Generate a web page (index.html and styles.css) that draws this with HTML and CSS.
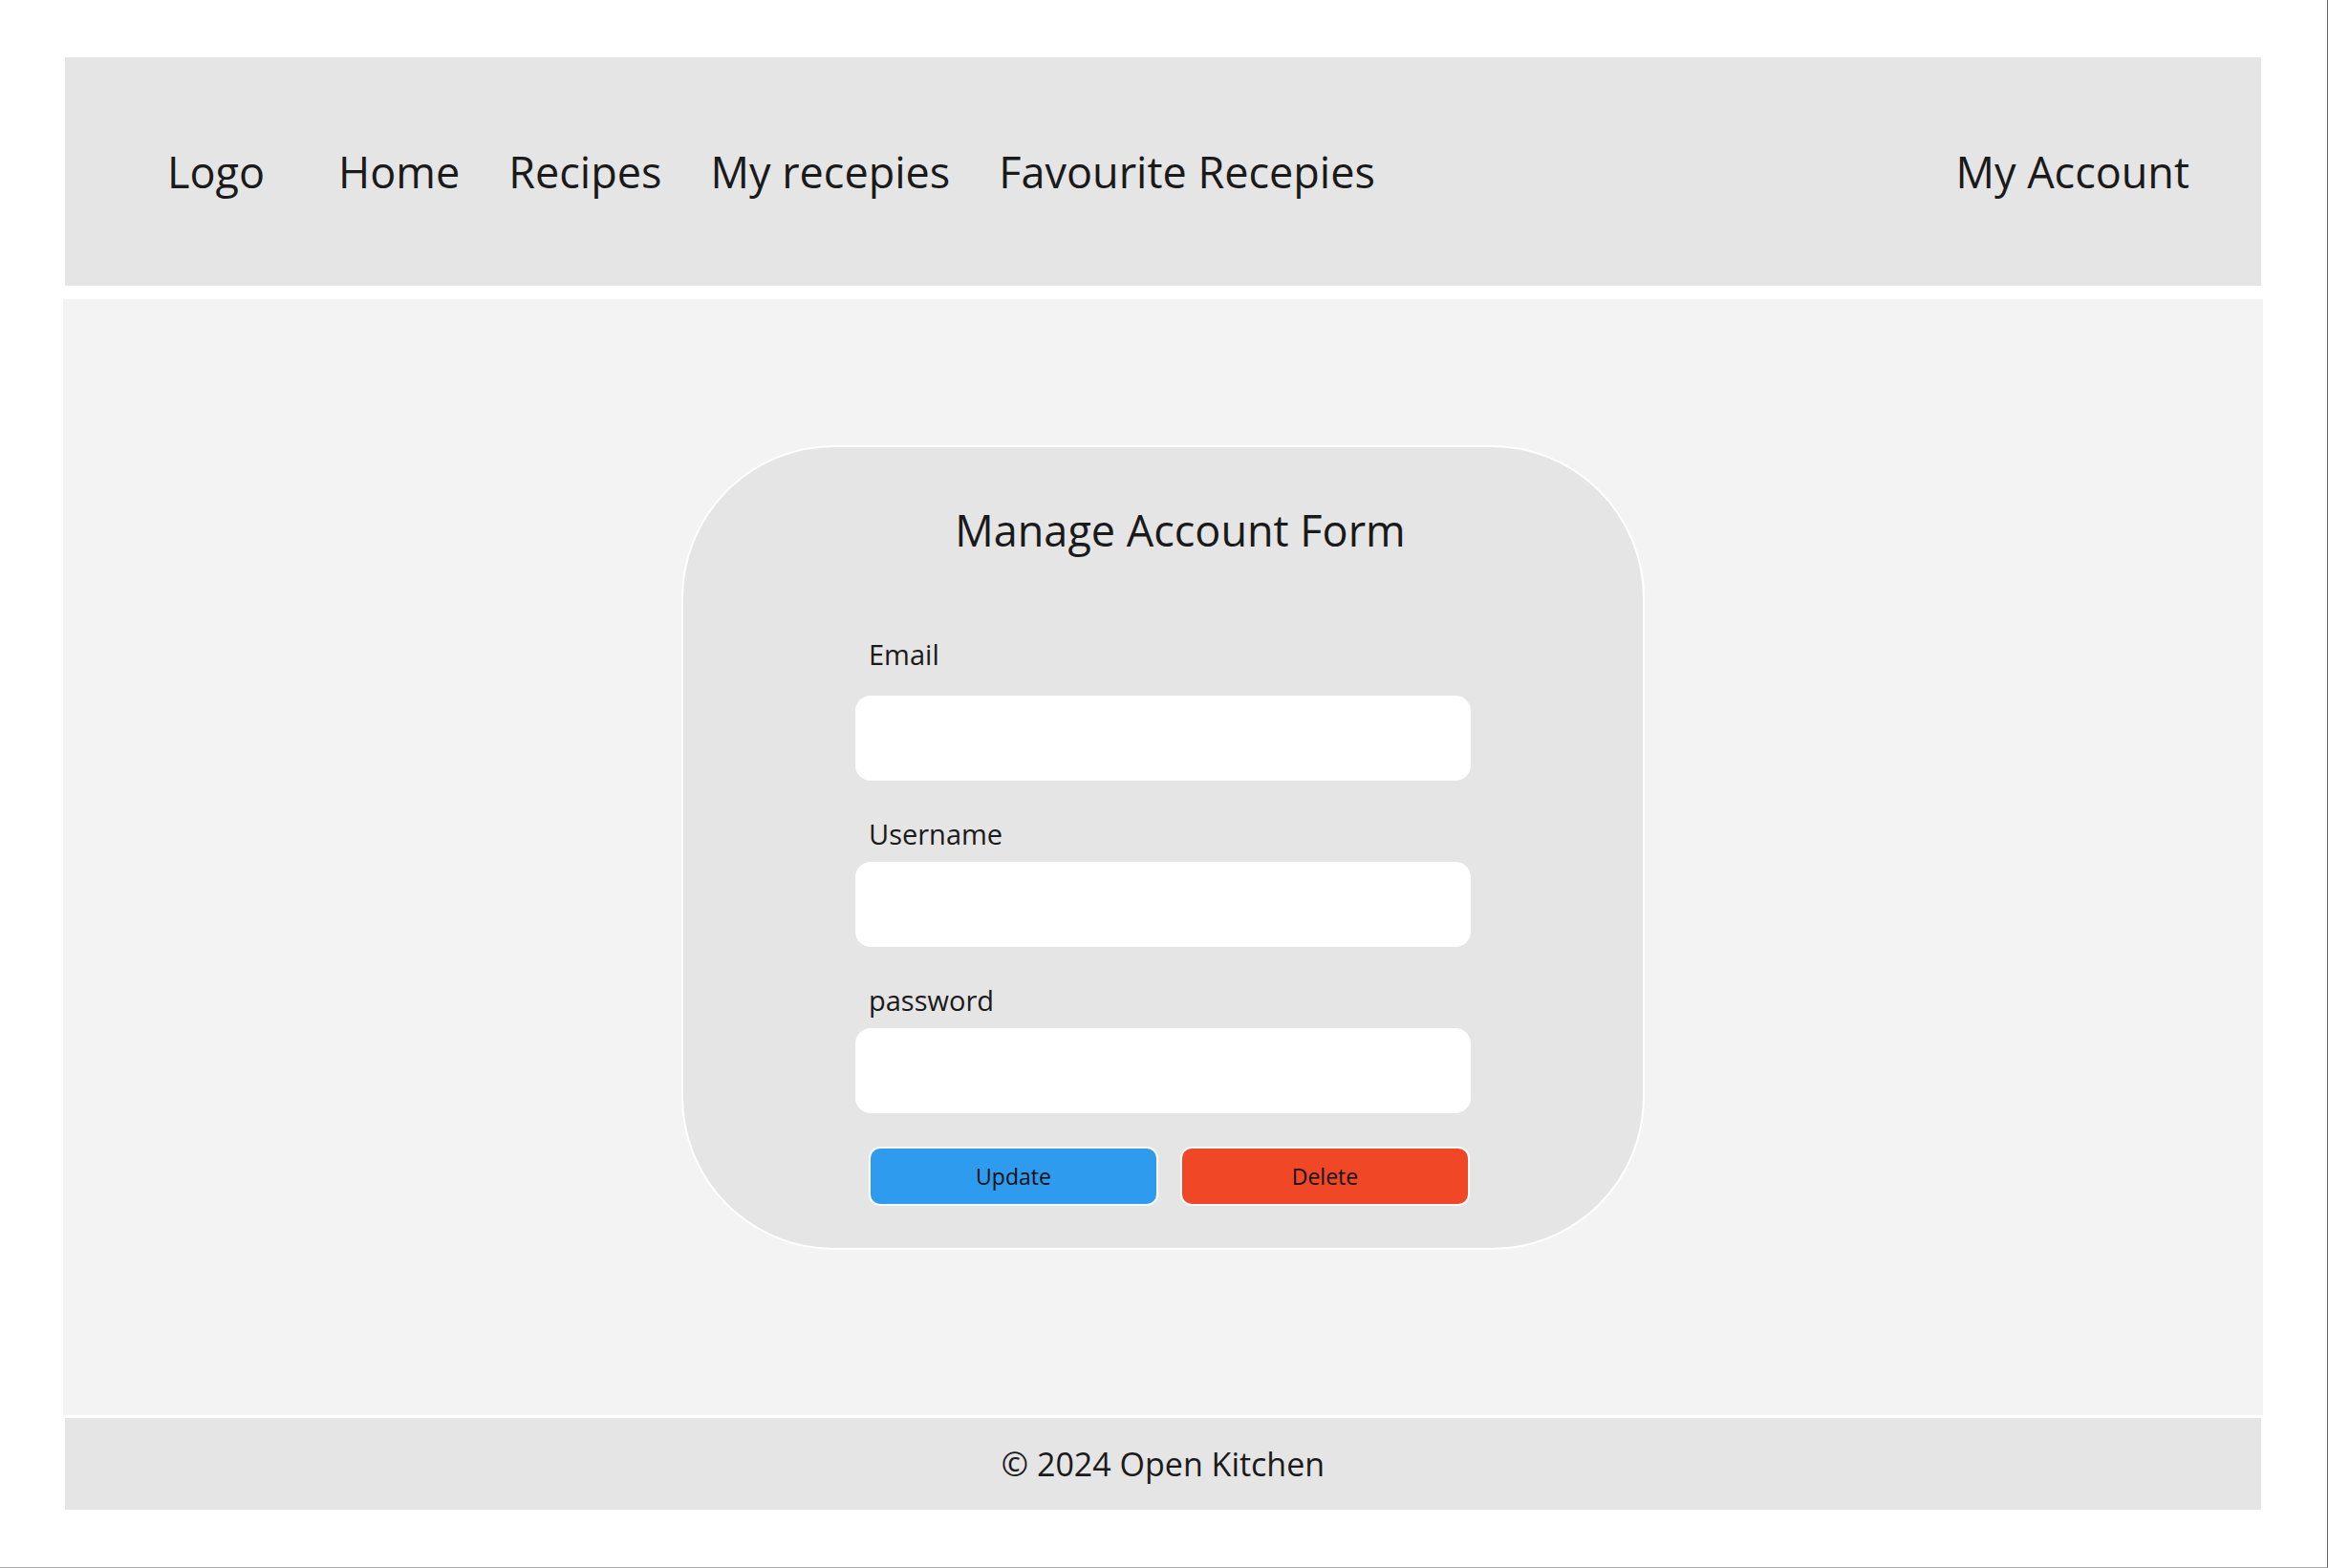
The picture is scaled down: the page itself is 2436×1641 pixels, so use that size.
FILE: index.html
```html
<!DOCTYPE html>
<html lang="en">
<head>
<meta charset="utf-8">
<title>Manage Account</title>
<link rel="stylesheet" href="styles.css">
</head>
<body>
<div class="page">
  <header class="site-header">
    <nav class="nav">
      <a class="nav-logo" href="#">Logo</a>
      <a class="nav-link" href="#">Home</a>
      <a class="nav-link" href="#">Recipes</a>
      <a class="nav-link" href="#">My recepies</a>
      <a class="nav-link" href="#">Favourite Recepies</a>
    </nav>
    <a class="nav-account" href="#">My Account</a>
  </header>
  <main class="content">
    <section class="card">
      <h1 class="card-title">Manage Account Form</h1>
      <form class="form">
        <label class="field-label field-label-first" for="email">Email</label>
        <input class="field-input" id="email" type="email">
        <label class="field-label" for="username">Username</label>
        <input class="field-input" id="username" type="text">
        <label class="field-label" for="password">password</label>
        <input class="field-input" id="password" type="password">
        <div class="actions">
          <button class="btn btn-update" type="button">Update</button>
          <button class="btn btn-delete" type="button">Delete</button>
        </div>
      </form>
    </section>
  </main>
  <footer class="site-footer">© 2024 Open Kitchen</footer>
</div>
</body>
</html>
```

FILE: styles.css
```css
html {
  height: 100%;
  box-sizing: border-box;
  border-right: 1px solid #666;
  border-bottom: 1px solid #aaa;
}
body {
  margin: 0;
  background: #ffffff;
  font-family: "Open Sans", "Noto Sans", sans-serif;
  color: #1a1a1a;
}
.page {
  padding: 60px 69px 0 68px;
}
.site-header {
  height: 239px;
  background: #e5e5e5;
  display: flex;
  align-items: center;
  justify-content: space-between;
  padding: 0 75px 0 107px;
  box-sizing: border-box;
}
.nav {
  display: flex;
  align-items: center;
}
.site-header a {
  color: #1a1a1a;
  text-decoration: none;
  font-size: 45px;
}
.nav-logo {
  margin-right: 77px;
}
.nav-link {
  margin-right: 51px;
}
.content {
  margin: 14px -2px 0 -2px;
  background: #f3f3f3;
  padding: 153px 0 173px;
  display: flex;
  justify-content: center;
}
.card {
  width: 1008px;
  height: 842px;
  box-sizing: border-box;
  background: #e5e5e5;
  border: 2px solid #ffffff;
  border-radius: 160px;
  padding-top: 56px;
}
.card-title {
  margin: 0;
  font-size: 45px;
  font-weight: 400;
  line-height: 61px;
  text-align: center;
  padding-left: 36px;
}
.form {
  width: 644px;
  margin: 80px auto 0;
  display: flex;
  flex-direction: column;
}
.field-label {
  font-size: 29px;
  line-height: 40px;
  padding-left: 14px;
  margin: 36px 0 9px;
}
.field-label-first {
  margin: 0 0 23px;
}
.field-input {
  height: 89px;
  border: none;
  border-radius: 16px;
  background: #ffffff;
  padding: 0 16px;
  font: inherit;
  box-sizing: border-box;
}
.actions {
  display: flex;
  gap: 23px;
  margin: 35px 0 0 14px;
}
.btn {
  width: 303px;
  height: 62px;
  border: 2px solid #fafafa;
  border-radius: 12px;
  font-family: "Open Sans", "Noto Sans", sans-serif;
  font-size: 23px;
  color: #111;
  padding: 0;
}
.btn-update {
  background: #2e9bef;
}
.btn-delete {
  background: #f04726;
}
.site-footer {
  margin-top: 3px;
  height: 96px;
  background: #e5e5e5;
  display: flex;
  align-items: center;
  justify-content: center;
  font-size: 34px;
}
```
